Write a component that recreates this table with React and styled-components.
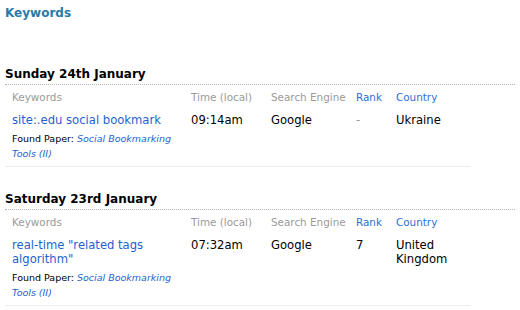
import React from "react";
import styled, { createGlobalStyle } from "styled-components";

const GlobalStyle = createGlobalStyle`
    body {
        margin: 0;
        background: #fff;
        font-family: "DejaVu Sans", Verdana, sans-serif;
        color: #000;
    }
`;

const Page = styled.div`
    width: 520px;
    height: 310px;
    padding: 4px 5px 0 5px;
    box-sizing: border-box;
    overflow: hidden;
`;

const Title = styled.h2`
    margin: 0 0 44px 0;
    font-size: 12px;
    font-weight: bold;
    color: #2a79a8;
    line-height: 18px;
`;

const Day = styled.section`
    margin-bottom: 24px;
`;

const DayTitle = styled.h3`
    margin: 0;
    font-size: 12px;
    font-weight: bold;
    line-height: 16px;
    padding-bottom: 2px;
    border-bottom: 1px dotted #b5b5b5;
`;

const Table = styled.div`
    width: 466px;
    display: grid;
    grid-template-columns: 179px 80px 85px 40px 82px;
    border-bottom: 1px solid #ececec;
`;

const Cell = styled.div`
    padding: 0 0 0 7px;
    font-size: 11.6px;
    line-height: 14px;
    color: ${(p) => (p.$muted ? "#999" : "#000")};
`;

const Head = styled(Cell)`
    padding-top: 6px;
    padding-bottom: 9px;
    font-size: 10.4px;
    line-height: 13px;
    color: ${(p) => (p.$link ? "#2b6fd6" : "#9a9a9a")};
`;

const Data = styled(Cell)`
    padding-bottom: 5px;
`;

const KeywordLink = styled.a`
    display: block;
    color: #1f5fcf;
    text-decoration: none;
    margin-bottom: 4px;
`;

const Found = styled.div`
    font-size: 9.5px;
    line-height: 15px;
    padding-right: 6px;
`;

const PaperLink = styled.a`
    color: #1f5fcf;
    font-style: italic;
    text-decoration: none;
`;

const days = [
    {
        date: "Sunday 24th January",
        keyword: "site:.edu social bookmark",
        time: "09:14am",
        engine: "Google",
        rank: "-",
        country: "Ukraine",
    },
    {
        date: "Saturday 23rd January",
        keyword: 'real-time "related tags algorithm"',
        time: "07:32am",
        engine: "Google",
        rank: "7",
        country: "United Kingdom",
    },
];

const App = () => {
    return (
        <>
            <GlobalStyle />
            <Page>
                <Title>Keywords</Title>
                {days.map((d) => (
                    <Day key={d.date}>
                        <DayTitle>{d.date}</DayTitle>
                        <Table>
                            <Head>Keywords</Head>
                            <Head>Time (local)</Head>
                            <Head>Search Engine</Head>
                            <Head $link>Rank</Head>
                            <Head $link>Country</Head>
                            <Data>
                                <KeywordLink href="#">{d.keyword}</KeywordLink>
                                <Found>
                                    Found Paper:{" "}
                                    <PaperLink href="#">
                                        Social Bookmarking Tools (II)
                                    </PaperLink>
                                </Found>
                            </Data>
                            <Data>{d.time}</Data>
                            <Data>{d.engine}</Data>
                            <Data $muted={d.rank === "-"}>{d.rank}</Data>
                            <Data>{d.country}</Data>
                        </Table>
                    </Day>
                ))}
            </Page>
        </>
    );
};

export default App;
